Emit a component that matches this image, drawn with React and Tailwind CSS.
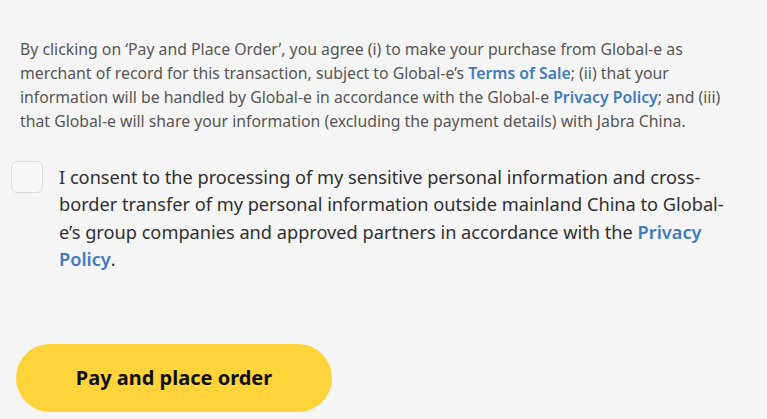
import { useState } from "react";

export default function App() {
  const [checked, setChecked] = useState(false);

  return (
    <div className="min-h-[419px] w-full bg-[#f5f5f5] font-['Noto_Sans',sans-serif]">
      <div className="pt-[37px] pl-5 pr-4">
        <p className="text-[15.8px] leading-6 text-[#555555] whitespace-nowrap">
          By clicking on ‘Pay and Place Order’, you agree (i) to make your purchase from Global-e as
          <br />
          merchant of record for this transaction, subject to Global-e’s{" "}
          <a href="#" className="font-semibold text-[#3f7bbd]">Terms of Sale</a>; (ii) that your
          <br />
          information will be handled by Global-e in accordance with the Global-e{" "}
          <a href="#" className="font-semibold text-[#3f7bbd]">Privacy Policy</a>; and (iii)
          <br />
          that Global-e will share your information (excluding the payment details) with Jabra China.
        </p>
      </div>

      <label className="mt-[26px] flex items-start gap-4 pl-[11px] pr-4 cursor-pointer">
        <input
          type="checkbox"
          checked={checked}
          onChange={() => setChecked(!checked)}
          className="sr-only"
        />
        <span className="mt-[2px] h-8 w-8 shrink-0 rounded-md border border-[#dcdcdc] bg-[#f7f7f7]" />
        <span className="pt-[5px] text-[18.2px] leading-[27.3px] text-[#2f2f33] whitespace-nowrap">
          I consent to the processing of my sensitive personal information and cross-
          <br />
          border transfer of my personal information outside mainland China to Global-
          <br />
          e’s group companies and approved partners in accordance with the{" "}
          <a href="#" className="font-semibold text-[#3f7bbd]">Privacy</a>
          <br />
          <a href="#" className="font-semibold text-[#3f7bbd]">Policy</a>.
        </span>
      </label>

      <div className="mt-[71px] pl-4 pb-2">
        <button className="h-[68px] w-[316px] rounded-full bg-[#ffd43b] text-[20px] font-bold text-[#111111]">
          Pay and place order
        </button>
      </div>
    </div>
  );
}
